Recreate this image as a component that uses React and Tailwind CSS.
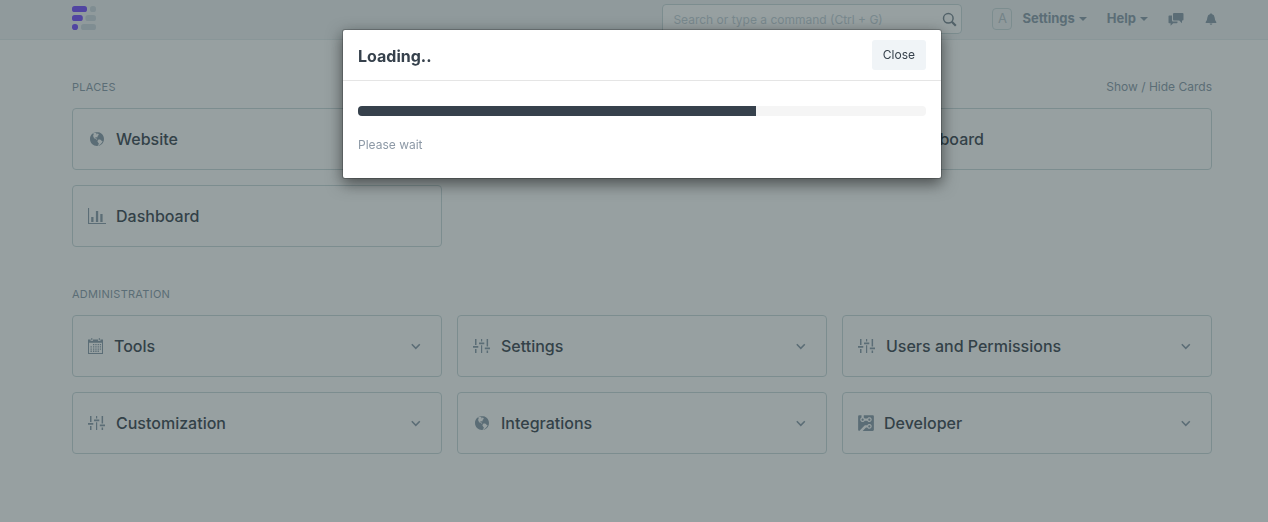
import React from "react";

const GLOBE =
  "M7 1C3.14 1 0 4.14 0 8s3.14 7 7 7c.48 0 .94-.05 1.38-.14-.17-.08-.2-.73-.02-1.09.19-.41.81-1.45.2-1.8-.61-.35-.44-.5-.81-.91-.37-.41-.22-.47-.25-.58-.08-.34.36-.89.39-.94.02-.06.02-.27 0-.33 0-.08-.27-.22-.34-.23-.06 0-.11.11-.2.13-.09.02-.5-.25-.59-.33-.09-.08-.14-.23-.27-.34-.13-.13-.14-.03-.33-.11s-.8-.31-1.28-.48c-.48-.19-.52-.47-.52-.66-.02-.2-.3-.47-.42-.67-.14-.2-.16-.47-.2-.41-.04.06.25.78.2.81-.05.02-.16-.2-.3-.38-.14-.19.14-.09-.3-.95s.14-1.3.17-1.75c.03-.45.38.17.19-.13-.19-.3 0-.89-.14-1.11-.13-.22-.88.25-.88.25.02-.22.69-.58 1.16-.92.47-.34.78-.06 1.16.05.39.13.41.09.28-.05-.13-.13.06-.17.36-.13.28.05.38.41.83.36.47-.03.05.09.11.22s-.06.11-.38.3c-.3.2.02.22.55.61s.38-.25.31-.55c-.07-.3.39-.06.39-.06.33.22.27.02.5.08.23.06.91.64.91.64-.83.44-.31.48-.17.59.14.11-.28.3-.28.3-.17-.17-.19.02-.3.08-.11.06-.02.22-.02.22-.56.09-.44.69-.42.83 0 .14-.38.36-.47.58-.09.2.25.64.06.66-.19.03-.34-.66-1.31-.41-.3.08-.94.41-.59 1.08.36.69.92-.19 1.11-.09.19.1-.06.53-.02.55.04.02.53.02.56.61.03.59.77.53.92.55.17 0 .7-.44.77-.45.06-.03.38-.28 1.03.09.66.36.98.31 1.2.47.22.16.08.47.28.58.2.11 1.06-.03 1.28.31.22.34-.88 2.09-1.22 2.28-.34.19-.48.64-.84.92s-.81.64-1.27.91c-.41.23-.47.66-.66.8 3.14-.7 5.48-3.5 5.48-6.84 0-3.86-3.14-7-7-7z";
const CIRCUIT =
  "M3 5c0-.55.45-1 1-1s1 .45 1 1-.45 1-1 1-1-.45-1-1zm8 0c0-.55-.45-1-1-1s-1 .45-1 1 .45 1 1 1 1-.45 1-1zm0 6c0-.55-.45-1-1-1s-1 .45-1 1 .45 1 1 1 1-.45 1-1zm2-10H5v2.17c.36.19.64.47.83.83h2.34c.42-.78 1.33-1.28 2.34-1.05.75.19 1.36.8 1.53 1.55.31 1.38-.72 2.59-2.05 2.59-.8 0-1.48-.44-1.83-1.09H5.83c-.42.8-1.33 1.28-2.34 1.03-.73-.17-1.34-.78-1.52-1.52C1.72 4.49 2.2 3.59 3 3.17V1H1c-.55 0-1 .45-1 1v12c0 .55.45 1 1 1l5-5h2.17c.42-.78 1.33-1.28 2.34-1.05.75.19 1.36.8 1.53 1.55.31 1.38-.72 2.59-2.05 2.59-.8 0-1.48-.44-1.83-1.09H6.99L4 15h9c.55 0 1-.45 1-1V2c0-.55-.45-1-1-1z";

function GlobeIcon() {
  return (
    <svg className="h-4 w-[18px] fill-current" viewBox="-2 0 18 16" aria-hidden="true">
      <path d={GLOBE} />
    </svg>
  );
}

function GraphIcon() {
  return (
    <svg className="h-[18px] w-[18px] fill-current" viewBox="0 0 18 18" aria-hidden="true">
      <path d="M0 1h1.1v15H18v1.1H0zM3.2 10h2.3v5H3.2zM7.9 4h2.3v11H7.9zM12.3 7h2.3v8h-2.3z" />
    </svg>
  );
}

function SlidersIcon() {
  return (
    <svg className="h-4 w-[18px] fill-current" viewBox="0 0 18 16" aria-hidden="true">
      <path d="M2 1h1.5v6H2zM0 8h5.3v1.8H0zM2 11h1.5v4H2zM8 1h1.2v2.4H8zM6 4.4h5.3v1.8H6zM8 7.2h1.2V15H8zM13.6 1h1.500v7.600h-1.500zM11.800 9.500H17v1.800h-5.200zM13.600 12.600h1.500V15h-1.500z" />
    </svg>
  );
}

function CalendarIcon() {
  return (
    <svg className="h-[18px] w-4 fill-current" viewBox="0 0 16 18" aria-hidden="true">
      <path
        fillRule="evenodd"
        d="M0 2.500h2.600V4h2.300V2.500h5.200V4h2.300V2.500H15V17H0zM1 5.800V16h13V5.800z"
      />
      <path d="M3.300 1h1v2.300h-1zM10.800 1h1v2.300h-1z" />
      <path d="M5 7h1.300v1.300H5zM7.300 7h1.300v1.300H7.300zM9.600 7h1.300v1.300H9.600zM11.800 7h1.300v1.300h-1.300zM2.500 9.200h1.300v1.300H2.500zM5 9.200h1.300v1.300H5zM7.300 9.200h1.300v1.300H7.300zM9.600 9.200h1.300v1.300H9.600zM11.800 9.200h1.300v1.300h-1.300zM2.500 11.400h1.300v1.300H2.500zM5 11.400h1.300v1.300H5zM7.300 11.400h1.300v1.300H7.300zM9.600 11.400h1.300v1.300H9.600zM11.800 11.400h1.300v1.300h-1.300zM2.500 13.600h1.300v1.300H2.500zM5 13.600h1.300v1.300H5zM7.300 13.600h1.300v1.300H7.300zM9.600 13.600h1.300v1.300H9.600z" />
    </svg>
  );
}

function CircuitIcon() {
  return (
    <svg className="h-[18px] w-4 fill-current" viewBox="0 0 14 16" aria-hidden="true">
      <path d={CIRCUIT} />
    </svg>
  );
}

function Chevron() {
  return (
    <svg
      className="h-4 w-[10px] fill-none stroke-current stroke-[1.6]"
      viewBox="0 0 10 16"
      aria-hidden="true"
    >
      <path d="M.8 6.300L4.800 10.300 8.800 6.300" />
    </svg>
  );
}

function Caret() {
  return (
    <svg className="h-1 w-2 fill-current" viewBox="0 0 8 4" aria-hidden="true">
      <path d="M0 0h8L4 4z" />
    </svg>
  );
}

function Logo() {
  return (
    <svg className="h-6 w-6" viewBox="0 0 24 24" aria-hidden="true">
      <g fill="#7348ff">
        <rect x="0" y="0" width="15" height="6" rx="2.6" />
        <rect x="0" y="9" width="10.8" height="6" rx="2.6" />
        <rect x="0" y="18" width="6" height="6" rx="2.8" />
      </g>
      <g fill="#cfd9e0">
        <rect x="18" y="0" width="6" height="6" rx="2.6" />
        <rect x="13.4" y="9" width="10.6" height="6" rx="2.6" />
        <rect x="9" y="18" width="15" height="6" rx="2.6" />
      </g>
    </svg>
  );
}

function Card({ icon, label, expandable }) {
  return (
    <button
      type="button"
      className="flex h-[62px] items-center gap-[10px] rounded border border-[#c9d8db] pr-5 pl-[15px] text-left text-[#8799a8]"
    >
      {icon}
      <span className="grow text-base font-medium text-[#36414c]">{label}</span>
      {expandable && <Chevron />}
    </button>
  );
}

function Section({ title, action, className, children }) {
  return (
    <section className={className}>
      <div className="mb-3 flex h-[18px] items-center justify-between text-[#8799a8]">
        <h2 className="text-[11px] tracking-wide uppercase">{title}</h2>
        {action}
      </div>
      <div className="grid grid-cols-3 gap-[15px]">{children}</div>
    </section>
  );
}

function Navbar() {
  return (
    <header className="flex h-10 items-start justify-between border-b border-[#e2eaec] bg-[#f0f3f5] pr-[50px] pl-[72px] text-[#8799a8]">
      <a href="#home" aria-label="Home" className="pt-[6px]">
        <Logo />
      </a>
      <div className="flex items-start">
        <div className="relative mt-1 mr-[30px]">
          <input
            type="text"
            aria-label="Search"
            placeholder="Search or type a command (Ctrl + G)"
            className="h-[30px] w-[300px] rounded border border-[#c9d8db] bg-white pr-8 pl-[10px] text-xs placeholder:text-[#c3d0d8]"
          />
          <svg
            className="absolute top-2 right-[5px] h-[15px] w-[15px] fill-none stroke-[#75838f] stroke-[1.5]"
            viewBox="0 0 15 15"
            aria-hidden="true"
          >
            <circle cx="6.3" cy="6.3" r="4.8" />
            <path d="M9.8 9.8l4 4" strokeWidth="2.2" />
          </svg>
        </div>
        <nav className="flex h-[37px] items-center text-[13px] font-bold">
          <span className="mr-[10px] flex h-[22px] w-5 items-center justify-center rounded border border-[#c9d8db] font-normal text-[#b8c4cc]">
            A
          </span>
          <button type="button" className="mr-5 flex items-center gap-1 font-bold">
            Settings <Caret />
          </button>
          <button type="button" className="mr-5 flex items-center gap-1 font-bold">
            Help <Caret />
          </button>
          <button type="button" aria-label="Messages" className="mr-5">
            <svg className="h-[14px] w-4 fill-current" viewBox="0 0 16 14" aria-hidden="true">
              <path d="M6 1h8.500q1 0 1 1v5.500q0 1-1 1H14v2.800L11.200 8.500H6q-1 0-1-1V2q0-1 1-1z" />
              <path d="M1.300 3.500H4V8.500q0 1 1 1h4.500v1q0 .8-.8.8H5.200L2.600 13.800v-2.500H1.300q-.8 0-.8-.8V4.300q0-.8.8-.8z" />
            </svg>
          </button>
          <button type="button" aria-label="Notifications">
            <svg className="h-[14px] w-[14px] fill-current" viewBox="0 0 14 14" aria-hidden="true">
              <path d="M7 1.200q.8 0 .8.900 2.700.7 2.900 3.700.1 3 1.600 4.200v1H1.700v-1q1.500-1.200 1.600-4.200.2-3 2.900-3.700 0-.9.800-.9zM5.600 11.500h2.800q-.2 1.300-1.400 1.300t-1.400-1.300z" />
            </svg>
          </button>
        </nav>
      </div>
    </header>
  );
}

function LoadingDialog() {
  return (
    <div
      role="dialog"
      aria-modal="true"
      aria-labelledby="dialog-title"
      className="mx-auto w-[600px] max-w-full rounded-[3px] border border-black/20 bg-white bg-clip-padding text-[#36414c] shadow-[0_5px_15px_rgba(0,0,0,0.5)]"
    >
      <div className="flex items-center justify-between border-b border-[#e5e5e5] px-[15px] py-[10px]">
        <h1 id="dialog-title" className="pt-0.5 text-base font-bold">
          Loading..
        </h1>
        <button type="button" className="h-[30px] rounded-[3px] bg-[#f0f4f7] px-[11px] text-xs">
          Close
        </button>
      </div>
      <div className="px-[15px] pt-[25px] pb-6">
        <div
          role="progressbar"
          aria-label="Loading"
          aria-valuenow={70}
          aria-valuemin={0}
          aria-valuemax={100}
          className="h-[10px] overflow-hidden rounded bg-[#f5f5f5]"
        >
          <div className="h-full bg-[#36414c]" style={{ width: "70%" }} />
        </div>
        <p className="mt-5 text-xs leading-[18px] text-[#8d99a6]">Please wait</p>
      </div>
    </div>
  );
}

export default function App() {
  return (
    <div className="min-h-screen bg-white font-['Inter',sans-serif]">
      <Navbar />
      <main className="pt-[38px] pr-14 pb-16 pl-[72px]">
        <Section
          title="Places"
          action={
            <a href="#cards" className="text-xs">
              Show / Hide Cards
            </a>
          }
        >
          <Card icon={<GlobeIcon />} label="Website" />
          <Card icon={<SlidersIcon />} label="Social" />
          <Card icon={<GraphIcon />} label="Leaderboard" />
          <Card icon={<GraphIcon />} label="Dashboard" />
        </Section>
        <Section title="Administration" className="mt-[38px]">
          <Card icon={<CalendarIcon />} label="Tools" expandable />
          <Card icon={<SlidersIcon />} label="Settings" expandable />
          <Card icon={<SlidersIcon />} label="Users and Permissions" expandable />
          <Card icon={<SlidersIcon />} label="Customization" expandable />
          <Card icon={<GlobeIcon />} label="Integrations" expandable />
          <Card icon={<CircuitIcon />} label="Developer" expandable />
        </Section>
      </main>
      <div className="fixed inset-0 bg-[#2f4143]/50 pt-[29px] pl-4">
        <LoadingDialog />
      </div>
    </div>
  );
}
